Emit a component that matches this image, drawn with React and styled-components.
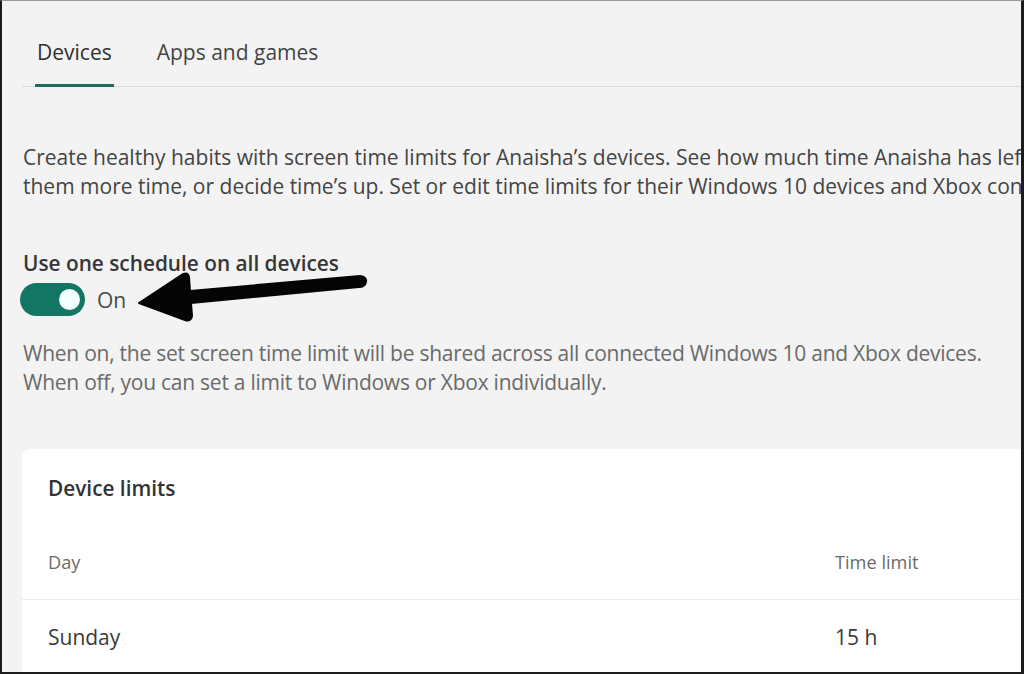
import React from 'react';
import styled, { createGlobalStyle } from 'styled-components';

const GlobalStyle = createGlobalStyle`
  html, body {
    margin: 0;
    padding: 0;
    background: #f3f3f3;
    overflow: hidden;
  }
  * {
    box-sizing: border-box;
  }
`;

const Frame = styled.div`
  position: relative;
  width: 1024px;
  height: 674px;
  overflow: hidden;
  background: #f3f3f3;
  border-top: 1px solid #9a9a9a;
  border-left: 2px solid #1c1c1c;
  border-right: 3px solid #1c1c1c;
  border-bottom: 2px solid #1c1c1c;
  font-family: 'Open Sans', 'Noto Sans', sans-serif;
  color: #3b3b3b;
`;

const Page = styled.div`
  width: 1200px;
  padding-left: 20px;
`;

const Tabs = styled.div`
  display: flex;
  gap: 41px;
  padding: 31px 0 0 13px;
  border-bottom: 1px solid #dadada;
`;

const Tab = styled.div`
  font-size: 21px;
  line-height: 40px;
  padding: 0 2px 12px;
  color: ${({ $active }) => ($active ? '#2f2f2f' : '#444')};
  border-bottom: 3px solid ${({ $active }) => ($active ? '#1f6a5e' : 'transparent')};
  margin-bottom: -1px;
`;

const Intro = styled.p`
  margin: 56px 0 0 1px;
  font-size: 21px;
  line-height: 29px;
  color: #444;
  white-space: nowrap;
`;

const Line = styled.span`
  display: block;
`;

const SettingTitle = styled.div`
  margin: 50px 0 0 1px;
  font-size: 20.8px;
  line-height: 24px;
  font-weight: 600;
  color: #363636;
`;

const ToggleRow = styled.div`
  display: flex;
  align-items: center;
  gap: 12px;
  margin-top: 8px;
`;

const Track = styled.div`
  width: 65px;
  height: 33px;
  margin-left: -2px;
  border-radius: 17px;
  background: #137563;
  display: flex;
  align-items: center;
  justify-content: flex-end;
  padding-right: 5px;
`;

const Knob = styled.div`
  width: 21px;
  height: 21px;
  border-radius: 50%;
  background: #f2fffc;
`;

const ToggleLabel = styled.span`
  font-size: 21px;
  color: #4a4a4a;
`;

const Help = styled.p`
  margin: 23px 0 0 1px;
  font-size: 21px;
  line-height: 29px;
  color: #6a6a6a;
  letter-spacing: -0.25px;
`;

const Card = styled.div`
  margin-top: 52px;
  background: #fff;
  border-radius: 8px;
  padding: 0 0 60px 26px;
`;

const CardTitle = styled.div`
  font-size: 20.8px;
  font-weight: 600;
  color: #333;
  padding-top: 25px;
  line-height: 28px;
`;

const Row = styled.div`
  display: grid;
  grid-template-columns: 787px 1fr;
  align-items: center;
  height: ${({ $h }) => $h}px;
  padding-top: ${({ $top }) => $top || 0}px;
  border-bottom: ${({ $divider }) => ($divider ? '1px solid #ececec' : 'none')};
  margin-left: ${({ $divider }) => ($divider ? '-26px' : '0')};
  padding-left: ${({ $divider }) => ($divider ? '26px' : '0')};
`;

const Cell = styled.div`
  font-size: ${({ $head }) => ($head ? '18.2px' : '21px')};
  color: ${({ $head }) => ($head ? '#6a6a6a' : '#3a3a3a')};
`;

const Arrow = styled.svg`
  position: absolute;
  left: 0;
  top: 0;
  pointer-events: none;
`;

export default function App() {
  return (
    <>
      <GlobalStyle />
      <Frame>
        <Page>
          <Tabs>
            <Tab $active>Devices</Tab>
            <Tab>Apps and games</Tab>
          </Tabs>
          <Intro>
            <Line>
              Create healthy habits with screen time limits for Anaisha’s devices. See how much time Anaisha has left, give
            </Line>
            <Line>
              them more time, or decide time’s up. Set or edit time limits for their Windows 10 devices and Xbox consoles.
            </Line>
          </Intro>
          <SettingTitle>Use one schedule on all devices</SettingTitle>
          <ToggleRow>
            <Track>
              <Knob />
            </Track>
            <ToggleLabel>On</ToggleLabel>
          </ToggleRow>
          <Help>
            When on, the set screen time limit will be shared across all connected Windows 10 and Xbox devices.
            <br />
            When off, you can set a limit to Windows or Xbox individually.
          </Help>
          <Card>
            <CardTitle>Device limits</CardTitle>
            <Row $h={98} $top={22} $divider>
              <Cell $head>Day</Cell>
              <Cell $head>Time limit</Cell>
            </Row>
            <Row $h={74}>
              <Cell>Sunday</Cell>
              <Cell>15 h</Cell>
            </Row>
          </Card>
        </Page>
        <Arrow width="1024" height="674" viewBox="0 0 1024 674">
          <path
            d="M137 302 L181 273 Q186 271 187 276 L188 290 L358 275 Q365 276 364 281 Q363 286 357 286 L189 302 L190 315 Q189 321 183 319 Z"
            fill="#050505"
            stroke="#050505"
            strokeWidth="2"
            strokeLinejoin="round"
          />
        </Arrow>
      </Frame>
    </>
  );
}
